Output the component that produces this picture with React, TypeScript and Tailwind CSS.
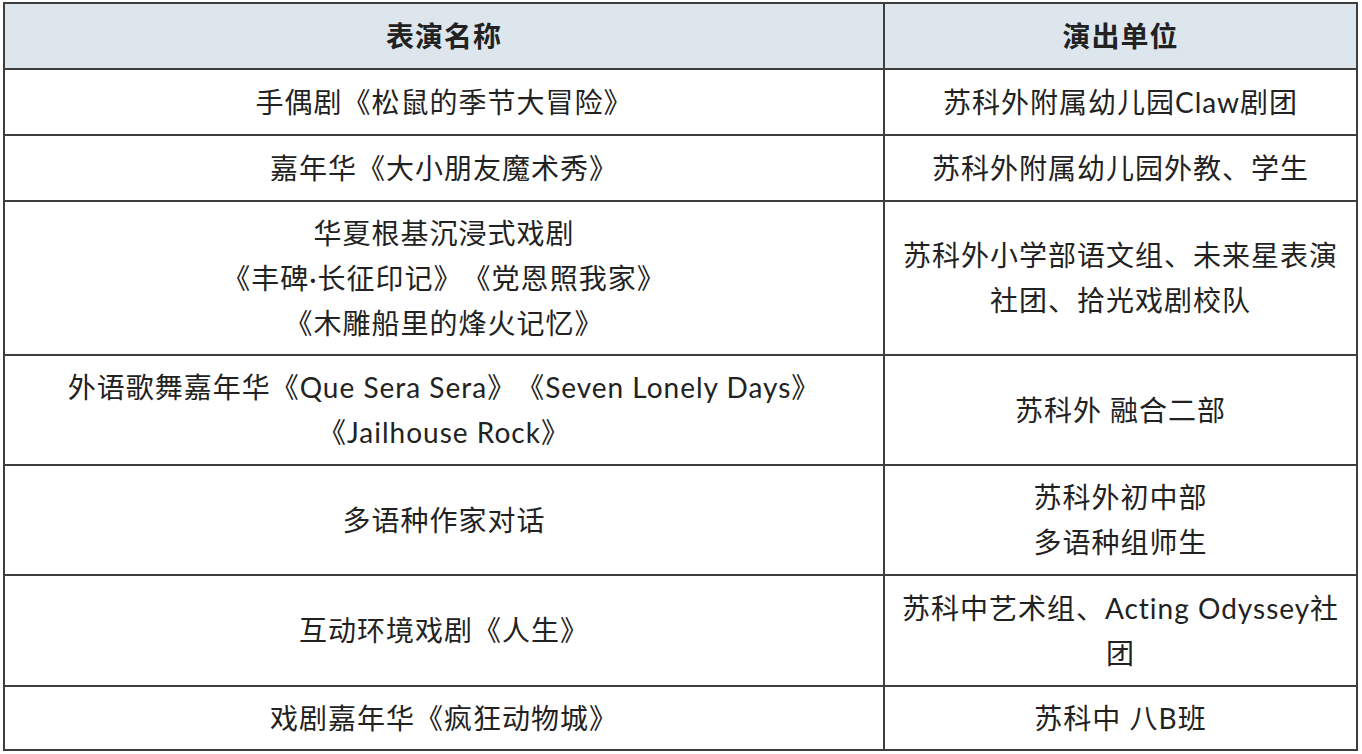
const rows: { name: string[]; unit: string[]; h: string }[] = [
  { name: ['手偶剧《松鼠的季节大冒险》'], unit: ['苏科外附属幼儿园Claw剧团'], h: 'h-[66px]' },
  { name: ['嘉年华《大小朋友魔术秀》'], unit: ['苏科外附属幼儿园外教、学生'], h: 'h-[66px]' },
  {
    name: ['华夏根基沉浸式戏剧', '《丰碑·长征印记》《党恩照我家》', '《木雕船里的烽火记忆》'],
    unit: ['苏科外小学部语文组、未来星表演', '社团、拾光戏剧校队'],
    h: 'h-[154px]',
  },
  {
    name: ['外语歌舞嘉年华《Que Sera Sera》《Seven Lonely Days》', '《Jailhouse Rock》'],
    unit: ['苏科外 融合二部'],
    h: 'h-[110px]',
  },
  { name: ['多语种作家对话'], unit: ['苏科外初中部', '多语种组师生'], h: 'h-[110px]' },
  { name: ['互动环境戏剧《人生》'], unit: ['苏科中艺术组、Acting Odyssey社', '团'], h: 'h-[111px]' },
  { name: ['戏剧嘉年华《疯狂动物城》'], unit: ['苏科中 八B班'], h: 'h-[64px]' },
]

function Cell({ lines, last }: { lines: string[]; last?: boolean }) {
  return (
    <div
      className={
        'flex flex-col items-center justify-center text-center ' +
        (last ? '' : 'border-r-2 border-[#3e3e3e]')
      }
    >
      {lines.map((l, i) => (
        <div key={i} className="whitespace-nowrap leading-[45px]">
          {l}
        </div>
      ))}
    </div>
  )
}

export default function App() {
  return (
    <div
      className="min-h-screen bg-white pt-[2px] pl-[3px] text-[28px] tracking-[1px] text-[#222222] [text-spacing-trim:space-all]"
      style={{ fontFamily: 'Lato, "Noto Sans CJK SC", sans-serif' }}
    >
      <div className="w-[1355px] border-2 border-[#3e3e3e]">
        <div className="grid h-[64px] grid-cols-[880px_1fr] bg-[#dde6ed] font-bold">
          <Cell lines={['表演名称']} />
          <Cell lines={['演出单位']} last />
        </div>
        {rows.map((r, i) => (
          <div key={i} className={'grid grid-cols-[880px_1fr] border-t-2 border-[#3e3e3e] ' + r.h}>
            <Cell lines={r.name} />
            <Cell lines={r.unit} last />
          </div>
        ))}
      </div>
    </div>
  )
}
